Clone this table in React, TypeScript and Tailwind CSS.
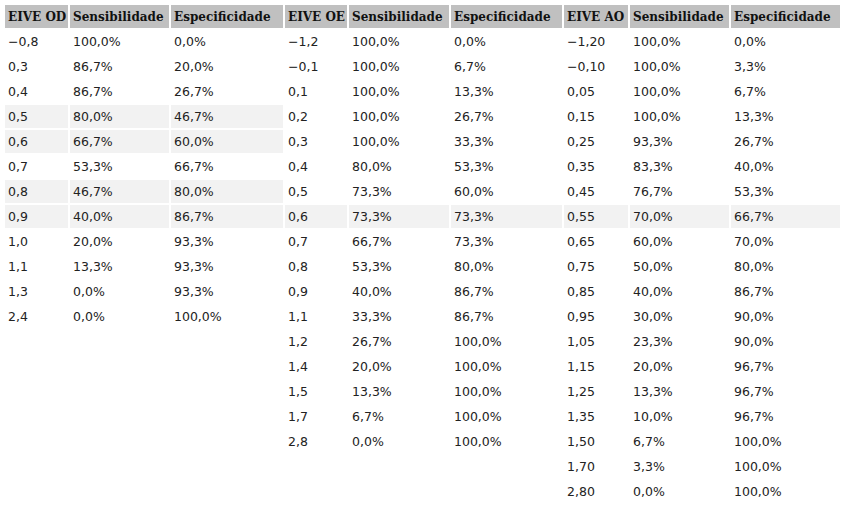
import React from "react";

type Row = [string, string, string];

const od: Row[] = [
  ["−0,8", "100,0%", "0,0%"],
  ["0,3", "86,7%", "20,0%"],
  ["0,4", "86,7%", "26,7%"],
  ["0,5", "80,0%", "46,7%"],
  ["0,6", "66,7%", "60,0%"],
  ["0,7", "53,3%", "66,7%"],
  ["0,8", "46,7%", "80,0%"],
  ["0,9", "40,0%", "86,7%"],
  ["1,0", "20,0%", "93,3%"],
  ["1,1", "13,3%", "93,3%"],
  ["1,3", "0,0%", "93,3%"],
  ["2,4", "0,0%", "100,0%"],
];

const oe: Row[] = [
  ["−1,2", "100,0%", "0,0%"],
  ["−0,1", "100,0%", "6,7%"],
  ["0,1", "100,0%", "13,3%"],
  ["0,2", "100,0%", "26,7%"],
  ["0,3", "100,0%", "33,3%"],
  ["0,4", "80,0%", "53,3%"],
  ["0,5", "73,3%", "60,0%"],
  ["0,6", "73,3%", "73,3%"],
  ["0,7", "66,7%", "73,3%"],
  ["0,8", "53,3%", "80,0%"],
  ["0,9", "40,0%", "86,7%"],
  ["1,1", "33,3%", "86,7%"],
  ["1,2", "26,7%", "100,0%"],
  ["1,4", "20,0%", "100,0%"],
  ["1,5", "13,3%", "100,0%"],
  ["1,7", "6,7%", "100,0%"],
  ["2,8", "0,0%", "100,0%"],
];

const ao: Row[] = [
  ["−1,20", "100,0%", "0,0%"],
  ["−0,10", "100,0%", "3,3%"],
  ["0,05", "100,0%", "6,7%"],
  ["0,15", "100,0%", "13,3%"],
  ["0,25", "93,3%", "26,7%"],
  ["0,35", "83,3%", "40,0%"],
  ["0,45", "76,7%", "53,3%"],
  ["0,55", "70,0%", "66,7%"],
  ["0,65", "60,0%", "70,0%"],
  ["0,75", "50,0%", "80,0%"],
  ["0,85", "40,0%", "86,7%"],
  ["0,95", "30,0%", "90,0%"],
  ["1,05", "23,3%", "90,0%"],
  ["1,15", "20,0%", "96,7%"],
  ["1,25", "13,3%", "96,7%"],
  ["1,35", "10,0%", "96,7%"],
  ["1,50", "6,7%", "100,0%"],
  ["1,70", "3,3%", "100,0%"],
  ["2,80", "0,0%", "100,0%"],
];

const groups = [
  { label: "EIVE OD", rows: od, shaded: [3, 4, 6, 7] },
  { label: "EIVE OE", rows: oe, shaded: [7] },
  { label: "EIVE AO", rows: ao, shaded: [7] },
];

// cell widths read off the screenshot
const widths = [63, 99, 112, 62, 100, 111, 64, 99, 109];
const total = Math.max(...groups.map((g) => g.rows.length));

export default function App() {
  return (
    <div className="w-[845px] h-[525px] bg-white pt-[3px] pl-[3px] text-[#222]">
      <table className="w-[839px] table-fixed border-separate border-spacing-[2px]">
        <colgroup>
          {widths.map((w, i) => (
            <col key={i} style={{ width: w }} />
          ))}
        </colgroup>
        <thead>
          <tr className="h-[23px] font-['DejaVu_Serif',serif] text-[12px] font-bold text-[#111]">
            {groups.map((g) => (
              <React.Fragment key={g.label}>
                <th className="bg-[#c0c0c0] p-0 pl-[3px] text-left whitespace-nowrap overflow-hidden">{g.label}</th>
                <th className="bg-[#c0c0c0] p-0 pl-[3px] text-left whitespace-nowrap overflow-hidden">Sensibilidade</th>
                <th className="bg-[#c0c0c0] p-0 pl-[3px] text-left whitespace-nowrap overflow-hidden">Especificidade</th>
              </React.Fragment>
            ))}
          </tr>
        </thead>
        <tbody className="font-['DejaVu_Sans',sans-serif] text-[12.5px]">
          {Array.from({ length: total }).map((_, r) => (
            <tr key={r} className="h-[23px]">
              {groups.map((g) => {
                const row = g.rows[r];
                const bg = row && g.shaded.includes(r) ? "bg-[#f2f2f2]" : "";
                return (
                  <React.Fragment key={g.label}>
                    {[0, 1, 2].map((c) => (
                      <td key={c} className={`${bg} p-0 pl-[3px] pt-[2px] whitespace-nowrap overflow-hidden`}>
                        {row ? row[c] : ""}
                      </td>
                    ))}
                  </React.Fragment>
                );
              })}
            </tr>
          ))}
        </tbody>
      </table>
    </div>
  );
}
